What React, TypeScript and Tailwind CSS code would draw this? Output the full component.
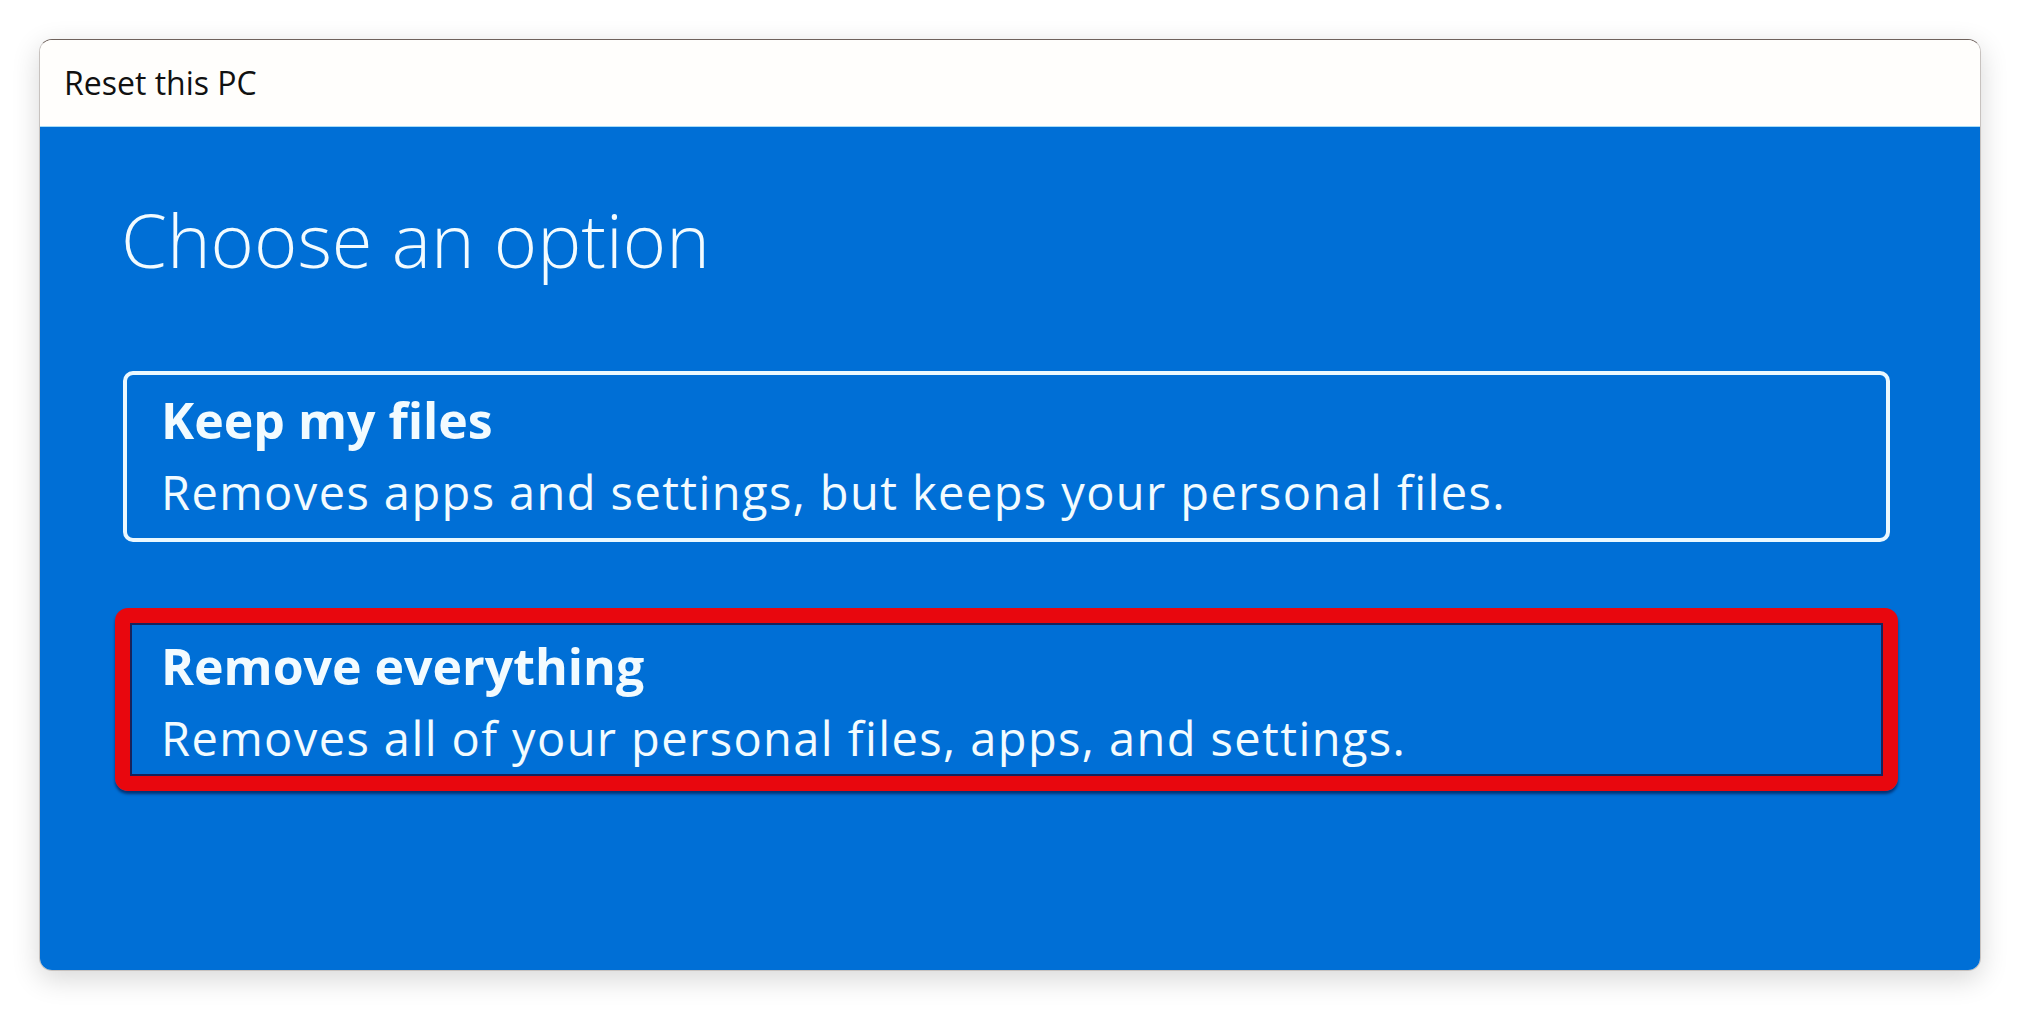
export default function App() {
  return (
    <div className="w-full h-[1010px] bg-white p-[39px] flex" style={{ fontFamily: '"Open Sans", "Noto Sans", sans-serif' }}>
      {/* Window */}
      <div className="flex-1 flex flex-col rounded-[13px] overflow-hidden border border-[#8f8680]/50 border-t-[#6f625c] shadow-[0_8px_28px_rgba(0,0,0,0.16)]">
        {/* Title bar */}
        <div className="h-[86px] flex items-center pl-[24px] bg-[#fffefc] shrink-0">
          <span className="text-[32px] text-[#111]">Reset this PC</span>
        </div>

        {/* Content */}
        <div className="flex-1 bg-[#006fd6] border-t border-[#a6dcf7] pt-[76px] pl-[83px] pr-[90px] text-[#f2fbff]">
          <h1 className="text-[74px] leading-none font-light -ml-[2px]">Choose an option</h1>

          <div className="mt-[94px] flex flex-col gap-[66px]">
            {/* Option 1 */}
            <div className="border-[4px] border-[#eaf8ff] rounded-[10px] pl-[34px] pt-[16px] pb-[17px]">
              <div className="text-[50px] leading-[58px] font-bold">Keep my files</div>
              <div className="mt-[14px] text-[47px] leading-[58px] tracking-[1.4px]">
                Removes apps and settings, but keeps your personal files.
              </div>
            </div>

            {/* Option 2, highlighted */}
            <div className="-mx-[8px] border-[15px] border-[#e8070e] rounded-[13px] pl-[31px] pt-[14px] pb-[9px] shadow-[inset_0_0_0_2px_#16235c,0_3px_3px_rgba(0,0,40,0.55)]">
              <div className="text-[50px] leading-[58px] font-bold">Remove everything</div>
              <div className="mt-[14px] text-[47px] leading-[58px] tracking-[1.4px]">
                Removes all of your personal files, apps, and settings.
              </div>
            </div>
          </div>
        </div>
      </div>
    </div>
  )
}
